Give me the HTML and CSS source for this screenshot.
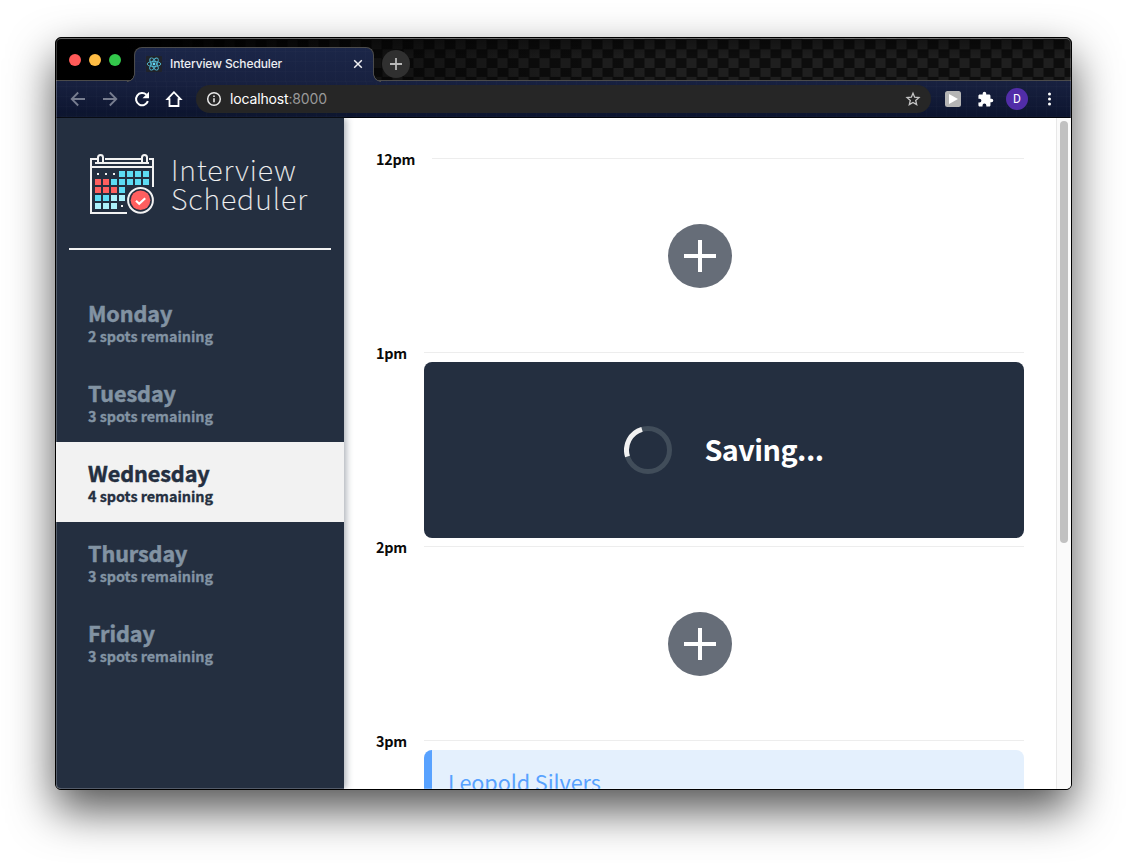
FILE: index.html
```html
<!DOCTYPE html>
<html lang="en">
<head>
<meta charset="utf-8">
<title>Interview Scheduler</title>
<link rel="stylesheet" href="styles.css">
</head>
<body>
<div class="window">
  <header class="tabstrip">
    <div class="lights"><i class="light red"></i><i class="light yellow"></i><i class="light green"></i></div>
    <div class="tab">
      <svg class="favicon" width="16" height="16" viewBox="0 0 16 16"><rect width="16" height="16" rx="1" fill="#20232a"/><g fill="none" stroke="#53b9d3" stroke-width=".9"><ellipse cx="8" cy="8" rx="6.8" ry="2.6"/><ellipse cx="8" cy="8" rx="6.8" ry="2.6" transform="rotate(60 8 8)"/><ellipse cx="8" cy="8" rx="6.8" ry="2.6" transform="rotate(120 8 8)"/></g><circle cx="8" cy="8" r="1.4" fill="#61dafb"/></svg>
      <span class="tab-title">Interview Scheduler</span>
      <svg class="tab-close" width="10" height="10" viewBox="0 0 10 10"><path d="M1.2 1.2l7.6 7.6M8.8 1.2L1.2 8.8" stroke="#f1f1f3" stroke-width="1.5"/></svg>
    </div>
    <div class="newtab"><svg width="12" height="12" viewBox="0 0 12 12"><path d="M6 0v12M0 6h12" stroke="#b9b9b9" stroke-width="1.8"/></svg></div>
  </header>
  <div class="toolbar">
    <span class="btn"><svg width="16" height="16" viewBox="0 0 16 16" fill="none" stroke="#777d8f" stroke-width="1.8"><path d="M15 8H2M8.2 1.5L1.7 8l6.5 6.5"/></svg></span>
    <span class="btn"><svg width="16" height="16" viewBox="0 0 16 16" fill="none" stroke="#777d8f" stroke-width="1.8"><path d="M1 8h13M7.8 1.5L14.3 8l-6.5 6.5"/></svg></span>
    <span class="btn"><svg width="16" height="16" viewBox="0 0 16 16"><path d="M13.9 10.2A6.1 6.1 0 1 1 12.4 3.8" fill="none" stroke="#fff" stroke-width="2"/><path d="M15 .8v6.5H8.5z" fill="#fff"/></svg></span>
    <span class="btn"><svg width="18" height="18" viewBox="0 0 18 18"><path d="M9 2.200L2.400 9.200H4.500V16H13.500V9.200H15.600z" fill="none" stroke="#fff" stroke-width="1.800"/></svg></span>
    <div class="omnibox">
      <svg width="16" height="16" viewBox="0 0 16 16"><circle cx="8" cy="8" r="6.3" fill="none" stroke="#e8e8e8" stroke-width="1.5"/><path d="M8 7.200v4M8 4.400v1.600" stroke="#e8e8e8" stroke-width="1.600"/></svg>
      <span class="url">localhost<span class="port">:8000</span></span>
      <svg class="star" width="16" height="16" viewBox="0 0 16 16"><path d="M8 2.200l1.650 4 4.300.35-3.250 2.850 1 4.200L8 11.400l-3.700 2.200 1-4.200L2.050 6.550l4.300-.35z" fill="none" stroke="#c4c4c4" stroke-width="1.300"/></svg>
    </div>
    <span class="btn"><svg width="16" height="16" viewBox="0 0 16 16"><rect width="16" height="16" rx="2.500" fill="#b5b5b5"/><path d="M4 3l9 5-9 5z" fill="#fff"/></svg></span>
    <span class="btn"><svg width="17" height="17" viewBox="0 0 24 24"><path fill="#fff" d="M20.500 11H19V7c0-1.100-.9-2-2-2h-4V3.500a2.500 2.500 0 0 0-5 0V5H4c-1.100 0-2 .9-2 2v3.800h1.500a2.700 2.700 0 0 1 0 5.400H2V20c0 1.100.9 2 2 2h3.800v-1.500a2.700 2.700 0 0 1 5.400 0V22H17c1.100 0 2-.9 2-2v-4h1.500a2.500 2.500 0 0 0 0-5z"/></svg></span>
    <span class="btn"><span class="avatar">D</span></span>
    <span class="btn"><svg width="4" height="14" viewBox="0 0 4 14" fill="#fff"><circle cx="2.500" cy="2" r="1.500"/><circle cx="2.500" cy="7" r="1.500"/><circle cx="2.500" cy="12" r="1.500"/></svg></span>
  </div>
  <div class="page">
    <aside class="sidebar">
      <div class="brand">
        <svg class="calendar" width="66" height="62" viewBox="0 0 66 62">
          <g fill="none" stroke="#f2f2f2" stroke-width="2">
            <path d="M8 6H2V60H38M16 6H52M60 6H64V34M2 14H64M6 10H60"/>
            <path d="M9 10V4.500a2.500 2.500 0 0 1 5 0V10M53 10V4.500a2.500 2.500 0 0 1 5 0V10"/>
          </g>
          <g fill="#f2f2f2"><path d="M8 20h2v2H8zM16 20h2v2h-2zM24 20h2v2h-2zM32 52h2v2h-2z"/></g>
          <g fill="#5ddcf4"><path d="M30 18h6v6h-6zM38 18h6v6h-6zM46 18h6v6h-6zM54 18h6v6h-6zM22 26h6v6h-6zM30 26h6v6h-6zM38 26h6v6h-6zM46 26h6v6h-6zM54 26h6v6h-6zM30 34h6v6h-6zM6 42h6v6H6zM14 42h6v6h-6z"/></g>
          <g fill="#ff5f5f"><path d="M6 26h6v6H6zM14 26h6v6h-6zM6 34h6v6H6zM14 34h6v6h-6zM22 34h6v6h-6z"/></g>
          <g fill="#adf1fb"><path d="M22 42h6v6h-6zM30 42h6v6h-6zM6 50h6v6H6zM14 50h6v6h-6zM22 50h6v6h-6z"/></g>
          <circle cx="51.500" cy="47.300" r="14" fill="#242f40"/>
          <circle cx="51.500" cy="47.300" r="12.400" fill="none" stroke="#f2f2f2" stroke-width="2"/>
          <circle cx="51.500" cy="47.300" r="9.800" fill="#ff5f5f"/>
          <path d="M47 47.800l3.200 3 6-5.500" fill="none" stroke="#fff" stroke-width="2.200"/>
        </svg>
        <div class="wordmark">Interview<br>Scheduler</div>
      </div>
      <hr class="divider">
      <ul class="days">
        <li class="day"><b class="name">Monday</b><span class="spots">2 spots remaining</span></li>
        <li class="day"><b class="name">Tuesday</b><span class="spots">3 spots remaining</span></li>
        <li class="day selected"><b class="name">Wednesday</b><span class="spots">4 spots remaining</span></li>
        <li class="day"><b class="name">Thursday</b><span class="spots">3 spots remaining</span></li>
        <li class="day"><b class="name">Friday</b><span class="spots">3 spots remaining</span></li>
      </ul>
    </aside>
    <main class="schedule">
      <section class="slot"><div class="hour"><span class="time">12pm</span><i class="rule"></i></div>
        <div class="empty"><svg class="add" width="64" height="64" viewBox="0 0 64 64"><circle cx="32" cy="32" r="32" fill="#666d78"/><path d="M32 16v32M16 32h32" stroke="#fff" stroke-width="4"/></svg></div></section>
      <section class="slot"><div class="hour"><span class="time">1pm</span><i class="rule"></i></div>
        <div class="status"><svg width="48" height="48" viewBox="0 0 48 48" fill="none" stroke-width="5"><circle cx="24" cy="24" r="21.500" stroke="#414d5a"/><path d="M3.500 30.500A21.500 21.500 0 0 1 18 3.400" stroke="#f2f2f2"/></svg><span class="status-text">Saving...</span></div></section>
      <section class="slot"><div class="hour"><span class="time">2pm</span><i class="rule"></i></div>
        <div class="empty"><svg class="add" width="64" height="64" viewBox="0 0 64 64"><circle cx="32" cy="32" r="32" fill="#666d78"/><path d="M32 16v32M16 32h32" stroke="#fff" stroke-width="4"/></svg></div></section>
      <section class="slot"><div class="hour"><span class="time">3pm</span><i class="rule"></i></div>
        <div class="booking"><span class="student">Leopold Silvers</span></div></section>
    </main>
    <div class="scrollbar"><i class="thumb"></i></div>
  </div>
</div>
</body>
</html>
```
FILE: styles.css
```css
* { box-sizing: border-box; }
body { margin: 0; height: 863px; padding: 37px 0 0 55px; background: #fff; overflow: hidden; font-family: "Noto Sans CJK SC", "Open Sans", sans-serif; }
svg { display: block; flex: none; }
.window { position: relative; width: 1017px; height: 753px; border: 1px solid #000; border-radius: 6px; overflow: hidden; background: #000; box-shadow: 0 20px 45px rgba(0,0,0,.68); display: flex; flex-direction: column; }
/* thin highlight along the inner window edge */
.window::after { content: ""; position: absolute; inset: 0; border: 1px solid rgba(255,255,255,.22); border-top-color: rgba(255,255,255,.4); border-radius: 5px; pointer-events: none; z-index: 2; }

.tabstrip { height: 43px; flex: none; display: flex; align-items: center; padding-top: 9px; border-bottom: 1px solid #4b4b4b;
  background: linear-gradient(rgba(0,0,0,.4), transparent 20px), linear-gradient(90deg, #000 0 70px, rgba(0,0,0,.4) 330px, transparent 600px),
  repeating-conic-gradient(#0d0d0d 0 25%, #1f1f1f 0 50%) .5px 1.500px / 21px 18.700px; }
.lights { display: flex; gap: 8px; padding-left: 13px; width: 78px; margin-top: -7px; flex: none; }
.light { width: 12px; height: 12px; border-radius: 50%; }
.red { background: #ff5a58; }
.yellow { background: #ffbd44; }
.green { background: #33c84b; }
.tab { position: relative; width: 240px; height: 35px; margin-bottom: -2px; border: 1px solid #4b4b4b; border-bottom: 0; border-radius: 8px 8px 0 0; display: flex; align-items: center; padding: 0 10px 2px 11px; z-index: 1;
  background: repeating-linear-gradient(90deg, rgba(255,255,255,.012) 0 1px, transparent 1px 10px), repeating-linear-gradient(0deg, rgba(255,255,255,.012) 0 1px, transparent 1px 10px), linear-gradient(#1b2648, #182140); }
.tab::before, .tab::after { content: ""; position: absolute; bottom: 0; width: 8px; height: 8px; }
.tab::before { left: -8px; background: radial-gradient(circle at 0 0, transparent 6.500px, #4b4b4b 7px 7.500px, #182140 8px); }
.tab::after { right: -8px; background: radial-gradient(circle at 100% 0, transparent 6.500px, #4b4b4b 7px 7.500px, #182140 8px); }
.tab-title { margin-left: 8px; padding-bottom: 2px; flex: 1; font: 500 12px Inter, sans-serif; letter-spacing: -.13px; color: #eceef2; white-space: nowrap; }
.newtab { width: 28px; height: 28px; margin-left: 8px; border-radius: 50%; background: #303030; display: flex; align-items: center; justify-content: center; }

.toolbar { height: 37px; flex: none; padding: 0 6px; display: flex; align-items: center; border-bottom: 1px solid #03050c;
  background: repeating-linear-gradient(90deg, rgba(255,255,255,.015) 0 1px, transparent 1px 10px), repeating-linear-gradient(0deg, rgba(255,255,255,.015) 0 1px, transparent 1px 10px), linear-gradient(#182140, #0c142e); }
.btn { width: 32px; height: 28px; flex: none; display: flex; align-items: center; justify-content: center; }
.omnibox { flex: 1; height: 28px; margin: 0 6px; border-radius: 14px; background: #262626; display: flex; align-items: center; padding: 0 10px; }
.url { margin-left: 8px; padding-bottom: 2px; flex: 1; font: 14px Inter, sans-serif; letter-spacing: -.15px; color: #fff; }
.port { color: #999; }
.avatar { width: 22px; height: 22px; border-radius: 50%; background: #512da8; color: #fff; font: 12px/22px Roboto, sans-serif; text-align: center; }

.page { flex: 1; min-height: 0; display: flex; background: #fff; }
.sidebar { width: 288px; flex: none; background: #242f40; box-shadow: 2px 0 7px rgba(36,47,64,.4); z-index: 1; }
.brand { display: flex; padding: 35px 0 0 33px; height: 130px; }
.wordmark { margin: 1px 0 0 16px; font-size: 28.800px; font-weight: 100; line-height: 29px; letter-spacing: .95px; color: #f2f2f2; -webkit-text-stroke: .2px #f2f2f2; }
.divider { width: 262px; height: 2px; margin: 0 0 0 13px; border: 0; background: #f2f2f2; }
.days { list-style: none; margin: 32px 0 0; padding: 0; }
.day { height: 80px; padding: 19px 0 0 32px; color: #8293a3; }
.selected { background: #f2f2f2; color: #242f40; }
.name { display: block; font-size: 21.600px; line-height: 24px; font-weight: 700; letter-spacing: -.08px; -webkit-text-stroke: .5px currentColor; }
.spots { display: block; font-size: 14.400px; line-height: 22px; font-weight: 700; letter-spacing: -.04px; -webkit-text-stroke: .3px currentColor; }

.schedule { width: 712px; flex: none; padding: 32px 32px 0; overflow: hidden; }
.slot { height: 194px; }
.hour { height: 18px; display: flex; }
.time { font-size: 14.400px; line-height: 18px; font-weight: 700; letter-spacing: -.25px; color: #0a0a0a; }
.rule { flex: 1; height: 1px; margin: 8px 0 0 17px; background: #ededed; }
.empty { height: 176px; display: flex; align-items: center; justify-content: center; }
.status { height: 176px; margin-left: 48px; border-radius: 8px; background: #242f40; display: flex; align-items: center; justify-content: center; gap: 32px; }
.status-text { font-size: 28.800px; font-weight: 700; line-height: 40px; margin-top: -2px; letter-spacing: -.55px; color: #fff; }
.booking { height: 176px; margin-left: 48px; border-left: 8px solid #58a2ff; border-radius: 8px; background: #e4f0fd; padding: 16px; }
.student { font-size: 21.600px; line-height: 32px; letter-spacing: -.06px; color: #58a2ff; }
.scrollbar { flex: 1; border-left: 1px solid #e8e8e8; background: #fafafa; padding: 3px 0 0 3px; }
.thumb { display: block; width: 8px; height: 422px; border-radius: 4px; background: #c1c1c1; }
```
